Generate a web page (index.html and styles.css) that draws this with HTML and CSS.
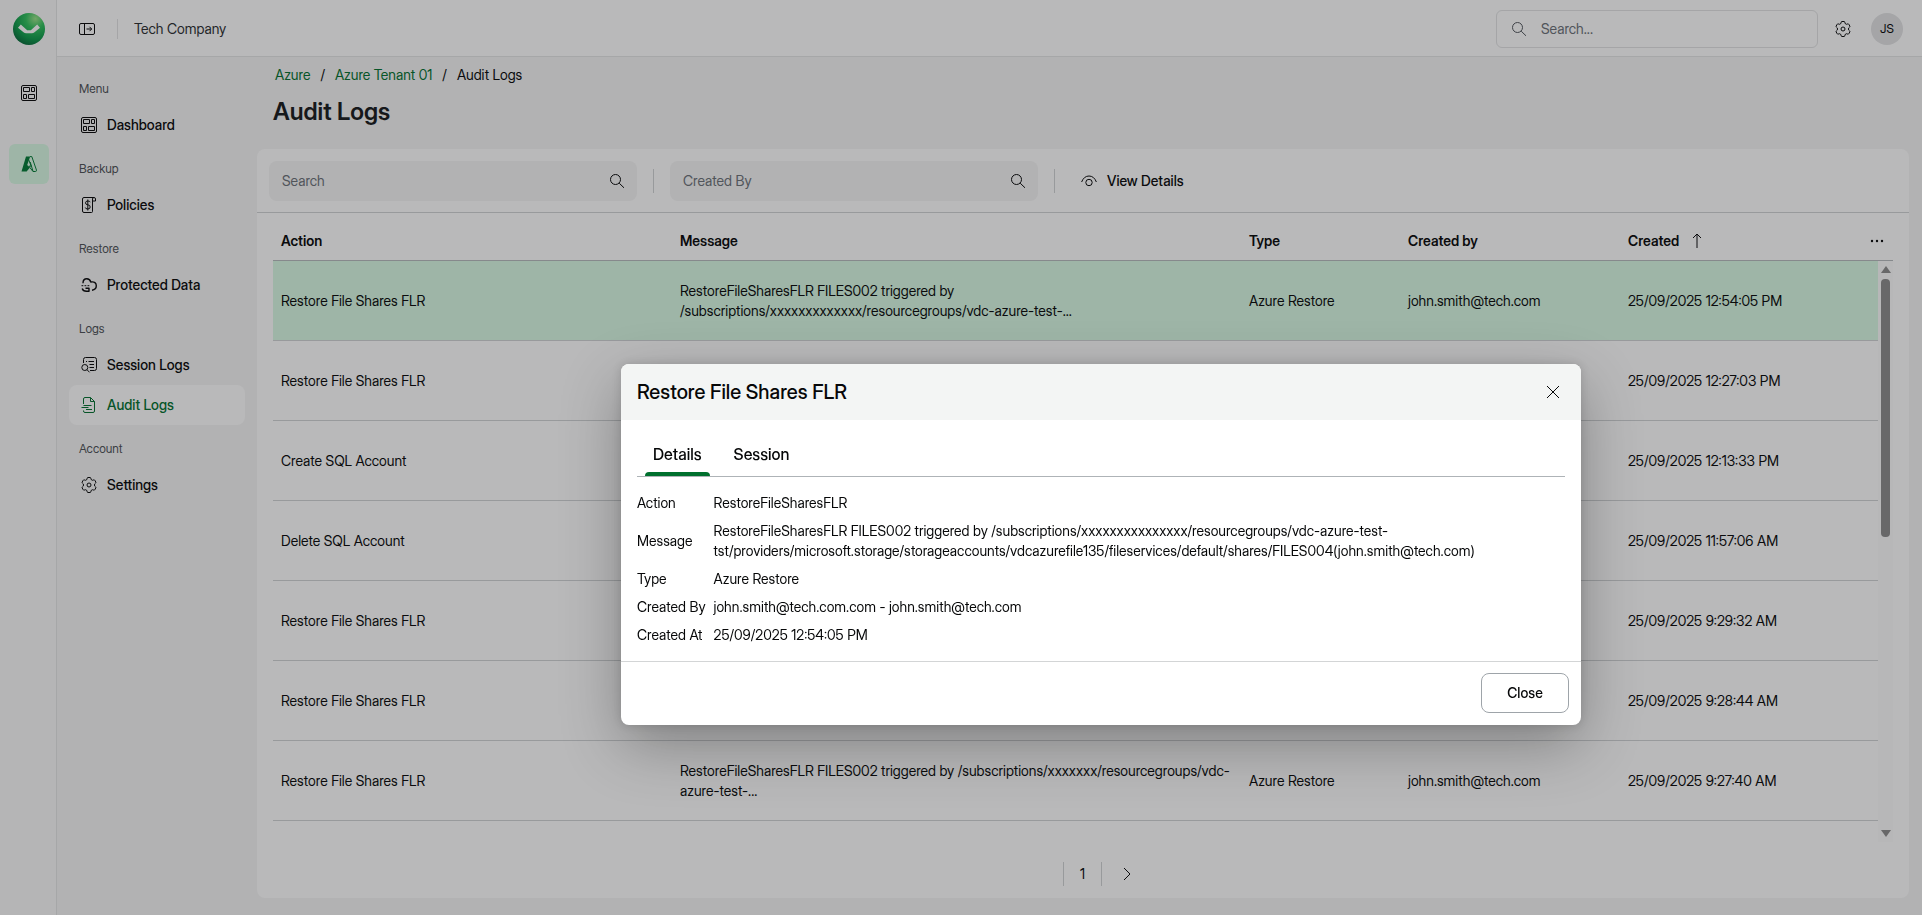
FILE: index.html
```html
<!DOCTYPE html>
<html lang="en">
<head>
    <meta charset="UTF-8">
    <meta name="viewport" content="width=device-width, initial-scale=1.0">
    <title>Audit Logs</title>
    <link rel="stylesheet" href="styles.css">
</head>
<body>
    <!-- shared icons -->
    <svg class="sprite" aria-hidden="true">
        <symbol id="icon-dashboard" viewBox="0 0 16 16">
            <rect x=".5" y=".5" width="15" height="15" rx="1.5"/>
            <path d="M2.5 2.5h6v4h-6zM10.5 2.5h3v4h-3zM2.5 9.5h3v4h-3zM7.5 9.5h6v4h-6z"/>
        </symbol>
        <symbol id="icon-search" viewBox="0 0 16 16">
            <circle cx="6.5" cy="6.5" r="5"/>
            <path d="M10.2 10.2l4.8 4.6"/>
        </symbol>
        <symbol id="icon-gear" viewBox="0 0 16 16">
            <path d="M7 .5h2q.7 0 .8.7l.3 1.3 1.4.8 1.3-.4q.7-.2 1 .4l1 1.7q.3.6-.2 1.1l-1 .9v2l1 .9q.5.5.2 1.1l-1 1.7q-.3.6-1 .4l-1.3-.4-1.4.8-.3 1.3q-.1.7-.8.7H7q-.7 0-.8-.7l-.3-1.3-1.4-.8-1.3.4q-.7.2-1-.4l-1-1.7q-.3-.6.2-1.1l1-.9V7l-1-.9Q.9 5.6 1.2 5l1-1.7q.3-.6 1-.4l1.3.4 1.4-.8.3-1.3Q6.3.5 7 .5z"/>
            <circle cx="8" cy="8" r="2"/>
        </symbol>
    </svg>

    <div class="app">
        <aside class="rail">
            <svg class="logo" viewBox="0 0 32 32" role="img" aria-label="Logo">
                <defs>
                    <radialGradient id="logoFill" cx="70%" cy="18%" r="85%">
                        <stop offset="0" stop-color="#9be38a"/>
                        <stop offset=".35" stop-color="#2fc15c"/>
                        <stop offset=".75" stop-color="#0c9a49"/>
                        <stop offset="1" stop-color="#07703c"/>
                    </radialGradient>
                </defs>
                <circle cx="16" cy="16" r="16" fill="url(#logoFill)"/>
                <path d="M5 14.8l2.8-3.3 6.4 5.7h3.6l6.4-5.7 2.8 3.3-5.500 4.400q-1.200 1-2.600 1h-5.800q-1.400 0-2.600-1z" fill="#fff"/>
            </svg>
            <a href="#" class="rail-link" aria-label="Dashboard"><svg class="icon"><use href="#icon-dashboard"/></svg></a>
            <a href="#" class="rail-link active" aria-label="Azure">
                <svg class="icon" viewBox="0 0 16 16">
                    <path d="M5 .5h4.2L6.2 9l2.6 2.7-3.2 3.8H.5z" fill="currentColor" stroke="none"/>
                    <path d="M9 .6h1.8l4.7 13.6q.1 1.3-1.2 1.3H12L7.8 10.2h2.4L7.6 3.5M12 15.3L9.2 6"/>
                </svg>
            </a>
        </aside>

        <div class="page">
            <header class="topbar">
                <button class="icon-btn" aria-label="Toggle menu">
                    <svg class="icon" viewBox="0 0 16 16"><rect x=".5" y="2.5" width="15" height="11" rx="1.5"/><path d="M5.5 2.5v11M7.5 8h5M10.5 5.8L12.7 8l-2.2 2.2"/></svg>
                </button>
                <span class="divider light"></span>
                <span class="company">Tech Company</span>
                <label class="global-search">
                    <svg class="icon"><use href="#icon-search"/></svg>
                    <input type="text" placeholder="Search..." aria-label="Search everything">
                </label>
                <button class="icon-btn" aria-label="Settings"><svg class="icon"><use href="#icon-gear"/></svg></button>
                <button class="avatar">JS</button>
            </header>

            <div class="body">
                <nav class="sidebar">
                    <h2>Menu</h2>
                    <a href="#"><svg class="icon"><use href="#icon-dashboard"/></svg>Dashboard</a>
                    <h2>Backup</h2>
                    <a href="#">
                        <svg class="icon" viewBox="0 0 16 16"><path d="M13 .5H3Q1.5.5 1.5 2v12q0 1.5 1.5 1.5h7.5q1 0 1-1V2Q11.5.5 13 .5t1.5 1.5v2h-3M9.2 5.2Q9 4 6.800 4T4.5 5.800t2.3 2 2.4 2.2-2.4 2-2.5-1.5M6.800 2.5v11"/></svg>
                        Policies
                    </a>
                    <h2>Restore</h2>
                    <a href="#">
                        <svg class="icon" viewBox="0 0 16 16"><path class="thick" d="M2 6.2Q2 1.8 5.8 1.8q3 0 4 3.2 5.5-.8 5.5 3.8 0 4-4.3 4.4M1.2 11.5q.8 2.7 4.3 2.7h2.5V11.2H4.5"/><path d="M.5 8.7h1.8M3.5 8.7h1.8M6.5 8.7h1.8"/></svg>
                        Protected Data
                    </a>
                    <h2>Logs</h2>
                    <a href="#">
                        <svg class="icon" viewBox="0 0 16 16"><path d="M2.5 6V2.5q0-2 2-2h9q2 0 2 2v9q0 2-2 2H9M5 4.5h1M7.5 4.5H13M8.5 7.5H13M8.5 10.5H13"/><circle cx="3.8" cy="10.5" r="3"/><path d="M6 12.7L8.5 15.3"/></svg>
                        Session Logs
                    </a>
                    <a href="#" class="active">
                        <svg class="icon" viewBox="0 0 16 16"><path d="M2.5 7V2q0-1.5 1.5-1.5h5.5l4 4V14q0 1.5-1.5 1.5H4q-1.5 0-1.5-1.5v-.5M9.5.5v4h4M2.5 8.5h8M.5 10.5h7M5 12.5h6"/></svg>
                        Audit Logs
                    </a>
                    <h2>Account</h2>
                    <a href="#"><svg class="icon"><use href="#icon-gear"/></svg>Settings</a>
                </nav>

                <main class="content">
                    <div class="breadcrumb">
                        <a href="#">Azure</a><span>/</span><a href="#">Azure Tenant 01</a><span>/</span>Audit Logs
                    </div>
                    <h1>Audit Logs</h1>

                    <section class="card">
                        <div class="toolbar">
                            <label class="filter">
                                <input type="text" placeholder="Search" aria-label="Search">
                                <svg class="icon"><use href="#icon-search"/></svg>
                            </label>
                            <span class="divider"></span>
                            <label class="filter">
                                <input type="text" placeholder="Created By" aria-label="Created By">
                                <svg class="icon"><use href="#icon-search"/></svg>
                            </label>
                            <span class="divider"></span>
                            <button class="view-btn">
                                <svg class="icon" viewBox="0 0 16 16"><path d="M.6 9Q3 3 8 3t7.4 6"/><circle cx="8" cy="9.5" r="3.2"/></svg>
                                View Details
                            </button>
                        </div>

                        <div class="grid">
                            <table>
                                <colgroup>
                                    <col class="col-action">
                                    <col>
                                    <col class="col-type">
                                    <col class="col-user">
                                    <col class="col-date">
                                    <col class="col-menu">
                                </colgroup>
                                <thead>
                                    <tr>
                                        <th>Action</th>
                                        <th>Message</th>
                                        <th>Type</th>
                                        <th>Created by</th>
                                        <th><span class="sorted">Created <svg class="icon" viewBox="0 0 16 16"><path d="M8 15V1M4 5l4-4 4 4"/></svg></span></th>
                                        <th>
                                            <button class="icon-btn" aria-label="Columns"><svg class="icon dots" viewBox="0 0 16 16"><circle cx="3" cy="8" r="1.2"/><circle cx="8" cy="8" r="1.2"/><circle cx="13" cy="8" r="1.2"/></svg></button>
                                        </th>
                                    </tr>
                                </thead>
                                <tbody>
                                    <tr class="selected">
                                        <td>Restore File Shares FLR</td>
                                        <td>RestoreFileSharesFLR FILES002 triggered by<br>/subscriptions/xxxxxxxxxxxxx/resourcegroups/vdc-azure-test-...</td>
                                        <td>Azure Restore</td>
                                        <td>john.smith@tech.com</td>
                                        <td colspan="2">25/09/2025 12:54:05 PM</td>
                                    </tr>
                                    <tr>
                                        <td>Restore File Shares FLR</td>
                                        <td></td>
                                        <td></td>
                                        <td></td>
                                        <td colspan="2">25/09/2025 12:27:03 PM</td>
                                    </tr>
                                    <tr>
                                        <td>Create SQL Account</td>
                                        <td></td>
                                        <td></td>
                                        <td></td>
                                        <td colspan="2">25/09/2025 12:13:33 PM</td>
                                    </tr>
                                    <tr>
                                        <td>Delete SQL Account</td>
                                        <td></td>
                                        <td></td>
                                        <td></td>
                                        <td colspan="2">25/09/2025 11:57:06 AM</td>
                                    </tr>
                                    <tr>
                                        <td>Restore File Shares FLR</td>
                                        <td></td>
                                        <td></td>
                                        <td></td>
                                        <td colspan="2">25/09/2025 9:29:32 AM</td>
                                    </tr>
                                    <tr>
                                        <td>Restore File Shares FLR</td>
                                        <td></td>
                                        <td></td>
                                        <td></td>
                                        <td colspan="2">25/09/2025 9:28:44 AM</td>
                                    </tr>
                                    <tr>
                                        <td>Restore File Shares FLR</td>
                                        <td>RestoreFileSharesFLR FILES002 triggered by /subscriptions/xxxxxxx/resourcegroups/vdc-<br>azure-test-...</td>
                                        <td>Azure Restore</td>
                                        <td>john.smith@tech.com</td>
                                        <td colspan="2">25/09/2025 9:27:40 AM</td>
                                    </tr>
                                </tbody>
                            </table>
                            <div class="scrollbar">
                                <span class="arrow up"></span>
                                <span class="thumb"></span>
                                <span class="arrow down"></span>
                            </div>
                        </div>

                        <div class="pagination">
                            <span class="divider"></span>
                            <span>1</span>
                            <span class="divider"></span>
                            <button class="icon-btn" aria-label="Next page"><svg class="icon" viewBox="0 0 16 16"><path d="M5 2l6 6-6 6"/></svg></button>
                        </div>
                    </section>
                </main>
            </div>
        </div>
    </div>

    <div class="overlay"></div>

    <div class="modal" role="dialog" aria-labelledby="modalTitle">
        <div class="modal-header">
            <h2 id="modalTitle">Restore File Shares FLR</h2>
            <button class="icon-btn" aria-label="Close dialog"><svg class="icon" viewBox="0 0 16 16"><path d="M2 2l12 12M14 2L2 14"/></svg></button>
        </div>
        <div class="modal-body">
            <div class="tabs">
                <button class="tab active">Details</button>
                <button class="tab">Session</button>
            </div>
            <table class="details">
                <tr><th>Action</th><td>RestoreFileSharesFLR</td></tr>
                <tr><th>Message</th><td>RestoreFileSharesFLR FILES002 triggered by /subscriptions/xxxxxxxxxxxxxxx/resourcegroups/vdc-azure-test-<br>tst/providers/microsoft.storage/storageaccounts/vdcazurefile135/fileservices/default/shares/FILES004(john.smith@tech.com)</td></tr>
                <tr><th>Type</th><td>Azure Restore</td></tr>
                <tr><th>Created By</th><td>john.smith@tech.com.com - john.smith@tech.com</td></tr>
                <tr><th>Created At</th><td>25/09/2025 12:54:05 PM</td></tr>
            </table>
        </div>
        <div class="modal-footer">
            <button class="close-btn">Close</button>
        </div>
    </div>
</body>
</html>
```

FILE: styles.css
```css
* {
    margin: 0;
    padding: 0;
    box-sizing: border-box;
}
body {
    font-family: "Inter Display", Inter, "Liberation Sans", sans-serif;
    font-size: 14px;
    font-weight: 400;
    line-height: 20px;
    color: #060708;
    background-color: #f5f5f5;
    overflow: hidden;
}
button, input {
    font: inherit;
    color: inherit;
    border: none;
    background: none;
    outline: none;
}
button {
    cursor: pointer;
}
a {
    text-decoration: none;
    color: inherit;
}
.sprite {
    display: none;
}
.icon {
    display: block;
    flex: none;
    width: 16px;
    height: 16px;
    fill: none;
    stroke: currentColor;
    stroke-width: 1;
    stroke-linejoin: round;
}
.icon .thick {
    stroke-width: 1.4;
}
.icon.dots {
    fill: currentColor;
    stroke: none;
}
.icon-btn {
    display: block;
    padding: 8px;
}
.divider {
    flex: none;
    width: 1px;
    height: 24px;
    background-color: #d0d3d5;
}
.divider.light {
    height: 20px;
    background-color: #e2e3e4;
}

/* app frame */
.app {
    display: flex;
    height: 100vh;
}
.rail {
    flex: none;
    width: 57px;
    padding: 13px 7px 0 8px;
    display: flex;
    flex-direction: column;
    align-items: center;
    gap: 31px;
    background-color: #fafafa;
    border-right: 1px solid #e4e5e6;
}
.logo {
    width: 32px;
    height: 32px;
    margin-bottom: -3px;
}
.rail-link {
    display: flex;
    align-items: center;
    justify-content: center;
    width: 40px;
    height: 40px;
    border-radius: 6px;
}
.rail-link.active {
    color: #007a35;
    background-color: #d8fae4;
}
.page {
    flex: 1;
    min-width: 0;
    display: flex;
    flex-direction: column;
}
.topbar {
    flex: none;
    height: 57px;
    display: flex;
    align-items: center;
    padding: 2px 19px 0 14px;
    background-color: #fff;
    border-bottom: 1px solid #e4e5e6;
}
.topbar .divider {
    margin: 0 16px 0 14px;
}
.company {
    flex: 1;
    color: #2a2d30;
}
.global-search {
    display: flex;
    align-items: center;
    gap: 14px;
    width: 322px;
    height: 38px;
    padding: 0 14px;
    margin-right: 9px;
    border: 1px solid #e2e3e4;
    border-radius: 6px;
    color: #50555b;
}
.global-search input {
    flex: 1;
    min-width: 0;
}
input::placeholder {
    color: #6a7077;
    opacity: 1;
}
.avatar {
    width: 32px;
    height: 32px;
    margin-left: 12px;
    border-radius: 50%;
    font-size: 12px;
    background-color: #e2e3e4;
}

/* sidebar */
.body {
    flex: 1;
    min-height: 0;
    display: flex;
}
.sidebar {
    flex: none;
    width: 200px;
    padding: 8px 12px;
}
.sidebar h2 {
    height: 40px;
    padding: 14px 10px 6px;
    font-size: 12px;
    font-weight: 400;
    color: #4c5156;
}
.sidebar a {
    display: flex;
    align-items: center;
    gap: 10px;
    height: 40px;
    padding: 0 12px;
    font-weight: 500;
    border-radius: 8px;
}
.sidebar a.active {
    color: #00702e;
    background-color: #fff;
}

/* main content */
.content {
    flex: 1;
    min-width: 0;
    display: flex;
    flex-direction: column;
    padding: 8px 13px 17px 0;
}
.breadcrumb {
    display: flex;
    padding-left: 18px;
}
.breadcrumb a {
    color: #00702e;
}
.breadcrumb span {
    padding: 0 10px;
}
h1 {
    padding: 12px 16px 22px;
    font-size: 24px;
    font-weight: 600;
    line-height: 30px;
    color: #16191c;
}
.card {
    flex: 1;
    min-height: 0;
    display: flex;
    flex-direction: column;
    background-color: #fff;
    border-radius: 8px;
}
.toolbar {
    display: flex;
    align-items: center;
    gap: 16px;
    padding: 12px 12px 11px;
    border-bottom: 1px solid #d0d3d5;
}
.filter {
    display: flex;
    align-items: center;
    width: 368px;
    height: 40px;
    padding: 0 12px 0 13px;
    background-color: #f5f5f5;
    border-radius: 8px;
}
.filter input {
    flex: 1;
    min-width: 0;
}
.view-btn {
    display: flex;
    align-items: center;
    gap: 10px;
    padding: 10px;
    font-weight: 500;
}

.grid {
    flex: 1;
    min-height: 0;
    position: relative;
    margin: 0 16px;
    overflow: hidden;
}
.grid table {
    width: 100%;
    table-layout: fixed;
    border-collapse: separate;
    border-spacing: 0;
}
.col-action { width: 399px; }
.col-type { width: 159px; }
.col-user { width: 220px; }
.col-date { width: 233px; }
.col-menu { width: 40px; }
.grid th {
    height: 48px;
    padding: 8px 8px 0;
    text-align: left;
    font-weight: 600;
    border-bottom: 1px solid #b6babe;
}
.grid td {
    height: 80px;
    padding: 0 8px;
    border-bottom: 1px solid #d0d3d5;
}
.sorted {
    display: flex;
    align-items: center;
    gap: 10px;
}
.selected {
    background-color: #d8fae4;
}
.scrollbar {
    position: absolute;
    top: 48px;
    right: 0;
    bottom: 0;
    width: 15px;
    display: flex;
    flex-direction: column;
    align-items: center;
    padding: 5px 0;
    background-color: #fcfcfc;
}
.thumb {
    width: 9px;
    height: 258px;
    margin: 6px 0 auto;
    border-radius: 4px;
    background-color: #8b8b8b;
}
.arrow {
    border: 5px solid transparent;
    border-top-width: 0;
    border-bottom: 7px solid #8b8b8b;
}
.arrow.down {
    transform: rotate(180deg);
}
.pagination {
    display: flex;
    align-items: center;
    justify-content: center;
    gap: 16px;
    height: 56px;
    padding: 8px 0 0 40px;
}
.pagination .icon-btn {
    margin-left: -7px;
}

/* dialog */
.overlay {
    position: fixed;
    inset: 0;
    background-color: rgba(22, 24, 28, 0.3);
}
.modal {
    position: fixed;
    top: 364px;
    left: calc(50% - 340px);
    width: 960px;
    background-color: #fff;
    border-radius: 8px;
    box-shadow: 0 20px 60px rgba(0, 0, 0, 0.3), 0 0 10px rgba(0, 0, 0, 0.15);
    overflow: hidden;
}
.modal-header {
    display: flex;
    align-items: center;
    justify-content: space-between;
    height: 56px;
    padding: 0 12px 0 16px;
    background-color: #f3f5f4;
}
.modal-header h2 {
    font-size: 20px;
    font-weight: 500;
}
.modal-body {
    padding: 16px 16px 12px;
}
.tabs {
    display: flex;
    gap: 16px;
    padding: 0 8px;
    border-bottom: 1px solid #aeb3b7;
}
.tab {
    position: relative;
    height: 40px;
    padding: 0 8px 4px;
    font-size: 16px;
    font-weight: 500;
}
.tab.active::after {
    content: "";
    position: absolute;
    left: 0;
    right: 0;
    bottom: 0;
    height: 4px;
    border-radius: 4px 4px 0 0;
    background-color: #00702e;
}
.details {
    margin-top: 12px;
    border-spacing: 0;
}
.details th, .details td {
    padding: 4px 8px 4px 0;
    text-align: left;
    font-weight: 400;
}
.modal-footer {
    display: flex;
    justify-content: flex-end;
    padding: 11px 12px 12px;
    border-top: 1px solid #d3d5d6;
}
.close-btn {
    width: 88px;
    height: 40px;
    font-weight: 500;
    border: 1px solid #9ea4a9;
    border-radius: 8px;
}
```
